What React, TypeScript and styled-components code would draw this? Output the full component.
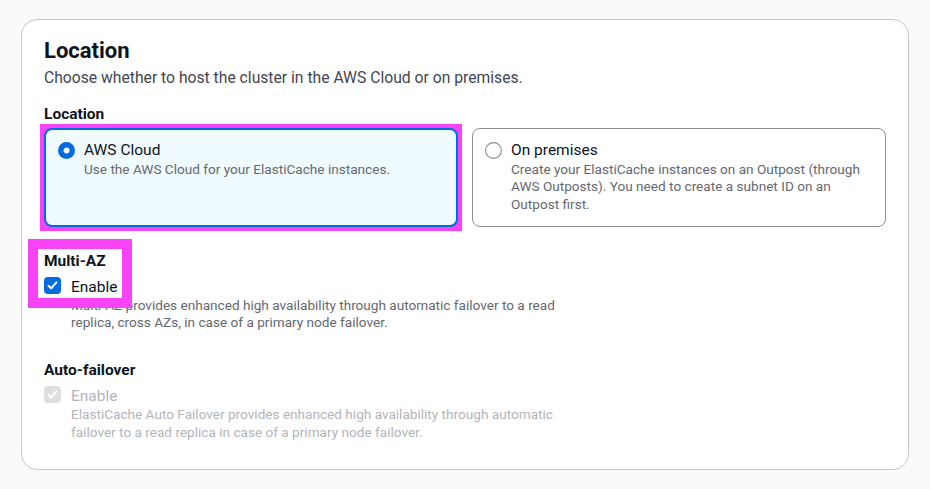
import React from "react";
import styled, { createGlobalStyle } from "styled-components";

const FONT = `Roboto, "Open Sans", "Liberation Sans", sans-serif`;

const Global = createGlobalStyle`
  html, body { margin: 0; padding: 0; background: #fafafa; }
  body { font-family: ${FONT}; color: #0f141a; -webkit-font-smoothing: antialiased; }
  * { box-sizing: border-box; }
`;

const Page = styled.div`
  width: 930px;
  height: 489px;
  padding: 19px 21px 19px 21px;
`;

const Card = styled.section`
  background: #ffffff;
  border: 1px solid #c6c6cd;
  border-radius: 16px;
  padding: 18px 22px 0 22px;
  height: 451px;
`;

const Title = styled.h2`
  margin: 0;
  font-size: 22px;
  line-height: 26px;
  font-weight: 700;
  color: #0f141a;
`;

const Description = styled.p`
  margin: 3px 0 0;
  font-size: 15.7px;
  line-height: 22px;
  color: #424650;
`;

const Field = styled.div<{ $top: number }>`
  margin-top: ${(p) => p.$top}px;
`;

const Label = styled.div`
  font-size: 15.5px;
  line-height: 22px;
  font-weight: 700;
  color: #0f141a;
`;

const Tiles = styled.div`
  margin-top: 2.5px;
  display: grid;
  grid-template-columns: 414px 414px;
  gap: 14px;
`;

const Tile = styled.div<{ $selected?: boolean }>`
  position: relative;
  height: 99px;
  border-radius: 8px;
  display: flex;
  gap: 9px;
  align-items: flex-start;
  background: ${(p) => (p.$selected ? "#f0fbff" : "#ffffff")};
  border: ${(p) => (p.$selected ? "2px solid #006ce0" : "1px solid #8c8c94")};
  padding: ${(p) => (p.$selected ? "9px 12px" : "10px 12px")};
`;

const Highlight = styled.div`
  position: relative;
  z-index: 2;
  outline: 10px solid #f843f6;
  outline-offset: -6px;
`;

const RadioIcon = styled.svg`
  flex: none;
  width: 17px;
  height: 17px;
  margin-top: 3px;
`;

const TileText = styled.div`
  display: flex;
  flex-direction: column;
`;

const TileTitle = styled.span`
  font-size: 15.5px;
  line-height: 22px;
  color: #0f141a;
`;

const SmallText = styled.span`
  font-size: 13.6px;
  line-height: 17.6px;
  color: #656871;
`;

const MarkBox = styled.div`
  position: relative;
  z-index: 2;
  display: inline-block;
  vertical-align: top;
  outline: 10px solid #f843f6;
  outline-offset: 0;
  margin-left: -6px;
  padding: 1.5px 4px 0 6px;
`;

const CheckRow = styled.div<{ $top: number }>`
  display: flex;
  align-items: flex-start;
  gap: 10px;
  margin-top: ${(p) => p.$top}px;
`;

const CheckBox = styled.span<{ $disabled?: boolean }>`
  flex: none;
  width: 17px;
  height: 17px;
  margin-top: 1px;
  border-radius: 4px;
  background: ${(p) => (p.$disabled ? "#dedee3" : "#006ce0")};
  display: flex;
  align-items: center;
  justify-content: center;
`;

const CheckLabel = styled.span<{ $disabled?: boolean }>`
  font-size: 15.5px;
  line-height: 22px;
  color: ${(p) => (p.$disabled ? "#b4b4bb" : "#0f141a")};
`;

const FieldDesc = styled.div<{ $disabled?: boolean }>`
  margin-top: -1px;
  padding-left: 27px;
  width: 537px;
  font-size: 13.6px;
  line-height: 17.6px;
  color: ${(p) => (p.$disabled ? "#b4b4bb" : "#656871")};
`;

const Radio = ({ checked }: { checked?: boolean }) => (
  <RadioIcon viewBox="0 0 17 17">
    {checked ? (
      <circle cx="8.5" cy="8.5" r="5.75" fill="#ffffff" stroke="#006ce0" strokeWidth="5.5" />
    ) : (
      <circle cx="8.5" cy="8.5" r="7.9" fill="#ffffff" stroke="#8c8c94" strokeWidth="1.1" />
    )}
  </RadioIcon>
);

const Check = () => (
  <svg width="13" height="13" viewBox="0 0 13 13">
    <path d="M2.6 6.8 L5.2 9.4 L10.4 3.4" fill="none" stroke="#ffffff" strokeWidth="2" strokeLinecap="round" strokeLinejoin="round" />
  </svg>
);

export default function App() {
  return (
    <>
      <Global />
      <Page>
        <Card>
          <Title>Location</Title>
          <Description>Choose whether to host the cluster in the AWS Cloud or on premises.</Description>

          <Field $top={14}>
            <Label>Location</Label>
            <Tiles>
              <Highlight>
                <Tile $selected>
                  <Radio checked />
                  <TileText>
                    <TileTitle>AWS Cloud</TileTitle>
                    <SmallText>Use the AWS Cloud for your ElastiCache instances.</SmallText>
                  </TileText>
                </Tile>
              </Highlight>
              <Tile>
                <Radio />
                <TileText>
                  <TileTitle>On premises</TileTitle>
                  <SmallText>
                    Create your ElastiCache instances on an Outpost (through AWS Outposts). You need to
                    create a subnet ID on an Outpost first.
                  </SmallText>
                </TileText>
              </Tile>
            </Tiles>
          </Field>

          <Field $top={22}>
            <MarkBox>
              <Label>Multi-AZ</Label>
              <CheckRow $top={3.5}>
                <CheckBox>
                  <Check />
                </CheckBox>
                <CheckLabel>Enable</CheckLabel>
              </CheckRow>
            </MarkBox>
            <FieldDesc>
              Multi-AZ provides enhanced high availability through automatic failover to a read
              replica, cross AZs, in case of a primary node failover.
            </FieldDesc>
          </Field>

          <Field $top={27}>
            <Label>Auto-failover</Label>
            <CheckRow $top={4.5}>
              <CheckBox $disabled>
                <Check />
              </CheckBox>
              <CheckLabel $disabled>Enable</CheckLabel>
            </CheckRow>
            <FieldDesc $disabled>
              ElastiCache Auto Failover provides enhanced high availability through automatic
              failover to a read replica in case of a primary node failover.
            </FieldDesc>
          </Field>
        </Card>
      </Page>
    </>
  );
}
